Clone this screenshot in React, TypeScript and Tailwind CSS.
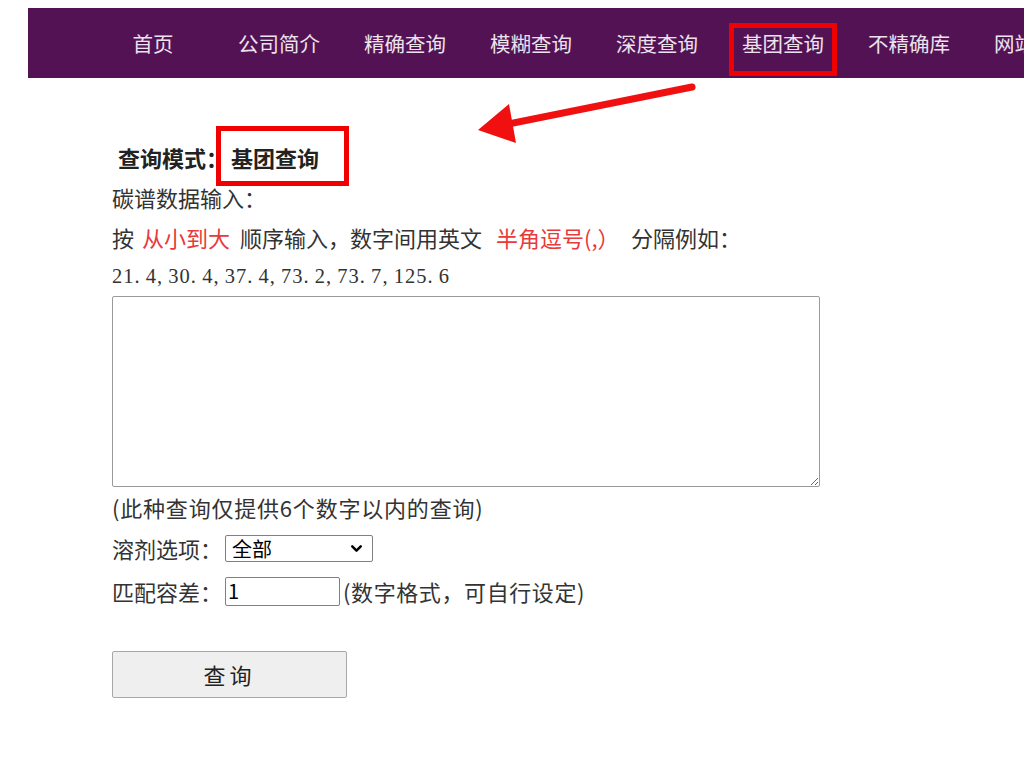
import { ChevronDown } from "lucide-react";

const cjk = { fontFamily: '"Noto Sans CJK SC", "Noto Sans", sans-serif' };

const navItems = [
  "首页",
  "公司简介",
  "精确查询",
  "模糊查询",
  "深度查询",
  "基团查询",
  "不精确库",
  "网站首页",
];

const sample = "21.4,30.4,37.4,73.2,73.7,125.6";

function Nav() {
  return (
    <div className="ml-[28px] mt-[8px] flex h-[70px] items-center overflow-hidden bg-[#531253] pl-[62px]">
      {navItems.map((t) => (
        <div
          key={t}
          className="w-[126px] shrink-0 text-center text-[20.5px] leading-none text-[#ece2ec]"
        >
          {t}
        </div>
      ))}
    </div>
  );
}

function SampleNumbers() {
  return (
    <div
      className="flex h-[39px] items-center text-[20.5px] text-[#333]"
      style={{ fontFamily: '"Liberation Serif", serif' }}
    >
      {sample.split("").map((c, i) => (
        <span key={i} className="inline-block w-[11.27px]">
          {c}
        </span>
      ))}
    </div>
  );
}

function Arrow() {
  return (
    <svg
      className="pointer-events-none absolute left-0 top-0"
      width="1024"
      height="769"
      viewBox="0 0 1024 769"
    >
      <line
        x1="692"
        y1="87"
        x2="508"
        y2="124"
        stroke="#f01010"
        strokeWidth="7"
        strokeLinecap="round"
      />
      <polygon points="478,130 509,104 516,143" fill="#f01010" />
    </svg>
  );
}

export default function App() {
  return (
    <div
      className="relative h-[769px] w-[1024px] overflow-hidden bg-white text-[#333]"
      style={cjk}
    >
      <Nav />

      <div className="pl-[112px] pt-[59px]">
        <div className="h-[40px] pl-[6px] text-[22px] font-bold leading-[40px] text-[#222]">
          查询模式：<span className="ml-[3px]">基团查询</span>
        </div>
        <div className="h-[40px] text-[22px] leading-[40px]">碳谱数据输入：</div>
        <div className="flex h-[40px] items-center whitespace-nowrap text-[22px] leading-none">
          <span>按</span>
          <span className="ml-[8px] text-[#e83a3a]">从小到大</span>
          <span className="ml-[10px]">顺序输入，数字间用英文</span>
          <span className="ml-[14px] text-[#e83a3a]">半角逗号</span>
          <span className="inline-block w-[37px] text-[#e83a3a]">(,）</span>
          <span className="ml-[10px]">分隔例如：</span>
        </div>
        <SampleNumbers />
        <textarea className="block h-[191px] w-[708px] rounded-[2px] border border-[#9a9a9a] bg-white" />
        <div className="h-[41px] text-[22px] leading-[40px] tracking-[0.8px]">
          (此种查询仅提供6个数字以内的查询)
        </div>
        <div className="flex h-[41px] items-center text-[22px]">
          <span>溶剂选项：</span>
          <div className="ml-[3px] flex h-[27px] w-[148px] items-center justify-between rounded-[2px] border border-[#808080] bg-white pl-[6px] pr-[7px]">
            <span className="text-[20px] leading-none text-black">全部</span>
            <ChevronDown size={17} strokeWidth={3.5} className="text-black" />
          </div>
        </div>
        <div className="flex h-[44px] items-center text-[22px]">
          <span>匹配容差：</span>
          <div className="ml-[3px] flex h-[29px] w-[115px] items-center rounded-[2px] border border-[#808080] bg-white pl-[2px] text-[20px] leading-none text-black">
            1
          </div>
          <span className="ml-[3px] tracking-[0.6px]">(数字格式，可自行设定)</span>
        </div>
        <button className="mt-[38px] flex h-[47px] w-[235px] items-center justify-center rounded-[2px] border border-[#a8a8a8] bg-[#efefef] text-[22px] tracking-[4px] text-[#222]">
          查询
        </button>
      </div>

      {/* annotations */}
      <div className="pointer-events-none absolute left-[729px] top-[23px] h-[53px] w-[108px] border-[5px] border-[#f00000]" />
      <div className="pointer-events-none absolute left-[216px] top-[126px] h-[60px] w-[133px] border-[5px] border-[#f00000]" />
      <Arrow />
    </div>
  );
}
